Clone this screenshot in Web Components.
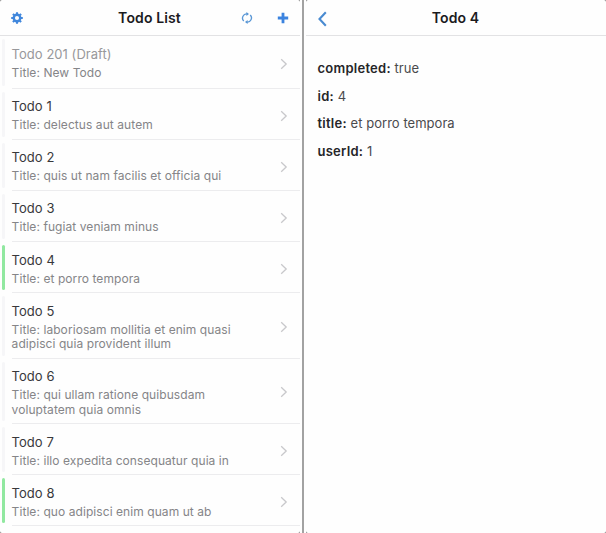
<!DOCTYPE html>
<html lang="en"><head><meta charset="utf-8"><title>Todo List</title>
<style>
html,body{margin:0;height:100%}
body{font-family:Inter,"Liberation Sans",sans-serif;background:#fefefe;overflow:hidden}
</style></head><body>
<todo-app></todo-app>
<script>
const define=(name,html,init)=>customElements.define(name,class extends HTMLElement{
  constructor(){super();this.attachShadow({mode:'open'}).innerHTML=html;}
  connectedCallback(){if(init)init.call(this,this.shadowRoot);}
});

define('nav-bar',`<style>
:host{display:grid;grid-template-columns:1fr auto 1fr;align-items:center;height:35px;box-sizing:content-box;border-bottom:1px solid #e2e2e4;padding:0 11px 0 10px;flex:none}
h1{margin:0;font-size:14px;line-height:18px;font-weight:600;letter-spacing:.12px;color:#1b1b1e;white-space:nowrap}
.end{display:flex;justify-content:flex-end;align-items:center;gap:24px}
.start{display:flex;align-items:center}
</style><div class="start"><slot name="start"></slot></div><h1><slot></slot></h1><div class="end"><slot name="end"></slot></div>`);

const icons={
gear:`<svg width="14" height="14" viewBox="0 0 14 14"><g fill="none" stroke="#4087dc"><circle cx="7" cy="7" r="3.25" stroke-width="2.4"/><path d="M7 1.2v2M7 10.8v2M1.2 7h2M10.8 7h2M2.9 2.9l1.4 1.4M9.7 9.7l1.4 1.4M11.1 2.9L9.7 4.3M4.3 9.7l-1.4 1.4" stroke-width="2.1"/></g></svg>`,
refresh:`<svg width="12" height="12" viewBox="0 0 12 12"><g fill="none" stroke="#5b98d6" stroke-width="1.35"><path d="M2.8 9A4.1 4.1 0 0 1 6.3 2M9.2 3A4.1 4.1 0 0 1 5.7 10"/></g><path d="M5.4 0v4.1L8 2zM6.6 7.9v4.1L4 10z" fill="#5b98d6"/></svg>`,
plus:`<svg width="12" height="12" viewBox="0 0 12 12"><path d="M6 .8v10.4M.8 6h10.4" stroke="#3b83df" stroke-width="2.8"/></svg>`,
back:`<svg width="10" height="18" viewBox="0 0 10 18"><path d="M8.8 3.3L2.5 10l6.3 6.7" fill="none" stroke="#4a8bd1" stroke-width="2.1"/></svg>`,
chevron:`<svg width="8" height="12" viewBox="0 0 8 12"><path d="M1.2 1.2L6.2 6l-5 4.8" fill="none" stroke="#c8c8cb" stroke-width="1.3"/></svg>`};
define('ui-icon',`<style>:host,svg{display:block}</style><div></div>`,function(r){r.querySelector('div').innerHTML=icons[this.getAttribute('name')];});

define('todo-row',`<style>
:host{display:grid;grid-template-columns:12px 1fr;height:51px;flex:none}
:host([first]){height:53px}
:host([tall]){height:66px}
:host([tall="short"]){height:65px}
.mark{width:3px;margin:3px 0 3px 2.4px;background:#f6f6f8;border-radius:1.5px;justify-self:start}
:host([done]) .mark{background:#91e8a0}
.body{border-bottom:1px solid #ececee;display:flex;justify-content:space-between;padding-right:12px}
.text{padding-top:9px;margin-left:-.4px}
h2{margin:0;font-weight:400;font-size:13px;line-height:17px;letter-spacing:.04px;color:#38383b}
:host([draft]) h2{color:#98989b}
p{margin:3px 0 0;font-size:12px;line-height:14.5px;letter-spacing:.07px;color:#858588;white-space:pre-line}
:host([draft]) .text{padding-top:10px}
:host([low]) .text{padding-top:9.5px}
ui-icon{align-self:center;position:relative;top:2px}
:host([tall]) ui-icon{top:1px}
</style><div class="mark"></div><div class="body"><div class="text"><h2><slot name="name"></slot></h2><p><slot></slot></p></div><ui-icon name="chevron"></ui-icon></div>`);

define('detail-field',`<style>
:host{display:block;font-size:13px;line-height:27.5px;letter-spacing:.04px;color:#4a4a4d}
b{font-weight:600;color:#252528;letter-spacing:.25px}
</style><b><slot name="key"></slot></b> <slot></slot>`);

define('todo-app',`<style>
:host{display:grid;grid-template-columns:300px 2px 1fr;column-gap:2px;height:533px;overflow:hidden}
.pane{background:#777;display:grid;min-width:0;overflow:hidden}
section{display:flex;flex-direction:column;overflow:hidden;min-width:0;background:#fefefe;border-radius:2px}
.divider{background:#a2a2a2;margin-left:0}
.detail nav-bar{padding:0 12px 0 11px}
.fields{padding:19px 11.5px}
</style>
<div class="pane"><section class="list"><nav-bar><ui-icon slot="start" name="gear"></ui-icon>Todo List<ui-icon slot="end" name="refresh"></ui-icon><ui-icon slot="end" name="plus"></ui-icon></nav-bar>
<todo-row first draft><span slot="name">Todo 201 (Draft)</span>Title: New Todo</todo-row>
<todo-row><span slot="name">Todo 1</span>Title: delectus aut autem</todo-row>
<todo-row><span slot="name">Todo 2</span>Title: quis ut nam facilis et officia qui</todo-row>
<todo-row><span slot="name">Todo 3</span>Title: fugiat veniam minus</todo-row>
<todo-row done low><span slot="name">Todo 4</span>Title: et porro tempora</todo-row>
<todo-row tall low><span slot="name">Todo 5</span>Title: laboriosam mollitia et enim quasi
adipisci quia provident illum</todo-row>
<todo-row tall="short"><span slot="name">Todo 6</span>Title: qui ullam ratione quibusdam
voluptatem quia omnis</todo-row>
<todo-row low><span slot="name">Todo 7</span>Title: illo expedita consequatur quia in</todo-row>
<todo-row done low><span slot="name">Todo 8</span>Title: quo adipisci enim quam ut ab</todo-row>
</section></div>
<div class="divider"></div>
<div class="pane"><section class="detail"><nav-bar><ui-icon slot="start" name="back"></ui-icon>Todo 4</nav-bar>
<div class="fields">
<detail-field><span slot="key">completed:</span>true</detail-field>
<detail-field><span slot="key">id:</span>4</detail-field>
<detail-field><span slot="key">title:</span>et porro tempora</detail-field>
<detail-field><span slot="key">userId:</span>1</detail-field>
</div></section></div>`);
</script></body></html>
